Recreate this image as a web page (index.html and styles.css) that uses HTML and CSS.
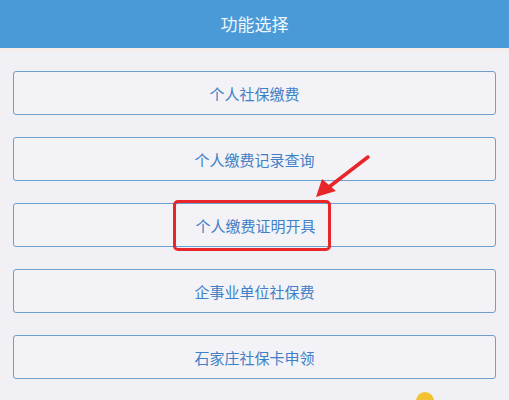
FILE: index.html
```html
<!DOCTYPE html>
<html lang="zh-CN">
<head>
    <meta charset="UTF-8">
    <meta name="viewport" content="width=device-width, initial-scale=1.0">
    <title>功能选择</title>
    <link rel="stylesheet" href="styles.css">
</head>
<body>

    <header class="top-bar">功能选择</header>

    <div class="menu">
        <a class="menu-btn">个人社保缴费</a>
        <a class="menu-btn">个人缴费记录查询</a>
        <a class="menu-btn"><span class="mark">个人缴费证明开具</span></a>
        <a class="menu-btn">企事业单位社保费</a>
        <a class="menu-btn">石家庄社保卡申领</a>
    </div>

    <!-- red annotation arrow -->
    <svg class="arrow" width="70" height="50" viewBox="0 0 70 50">
        <path d="M55 5 L16 35" stroke="#e8262a" stroke-width="3.5" stroke-linecap="round" fill="none"/>
        <polygon points="3,45 9,27 23,39" fill="#e8262a"/>
    </svg>

    <div class="blob"></div>

</body>
</html>
```

FILE: styles.css
```css
body {
    margin: 0;
    background: #f0f0f5;
    font-family: "Noto Sans CJK SC", "Microsoft YaHei", sans-serif;
    height: 400px;
    overflow: hidden;
    position: relative;
}

.top-bar {
    height: 48px;
    line-height: 47px;
    background: #4a9ad8;
    color: #eef6fc;
    text-align: center;
    font-size: 17px;
    border-bottom: 3px solid #f6ece9;
}

.menu {
    display: flex;
    flex-direction: column;
    gap: 22px;
    padding: 20px 13px 0 13px;
}

.menu-btn {
    display: flex;
    justify-content: center;
    align-items: center;
    height: 42px;
    border: 1px solid #6d9fcf;
    border-radius: 3px;
    background: #f2f2f7;
    color: #3f80c6;
    font-size: 15px;
    cursor: pointer;
}

.mark {
    display: flex;
    align-items: center;
    justify-content: center;
    box-sizing: border-box;
    width: 158px;
    height: 51px;
    padding-left: 8px;
    margin-right: 6px;
    flex-shrink: 0;
    border: 3px solid #e8262a;
    border-radius: 5px;
}

.arrow {
    position: absolute;
    left: 313px;
    top: 152px;
}

.blob {
    position: absolute;
    left: 416px;
    top: 392px;
    width: 18px;
    height: 18px;
    border-radius: 50%;
    background: #f2c230;
}
```
